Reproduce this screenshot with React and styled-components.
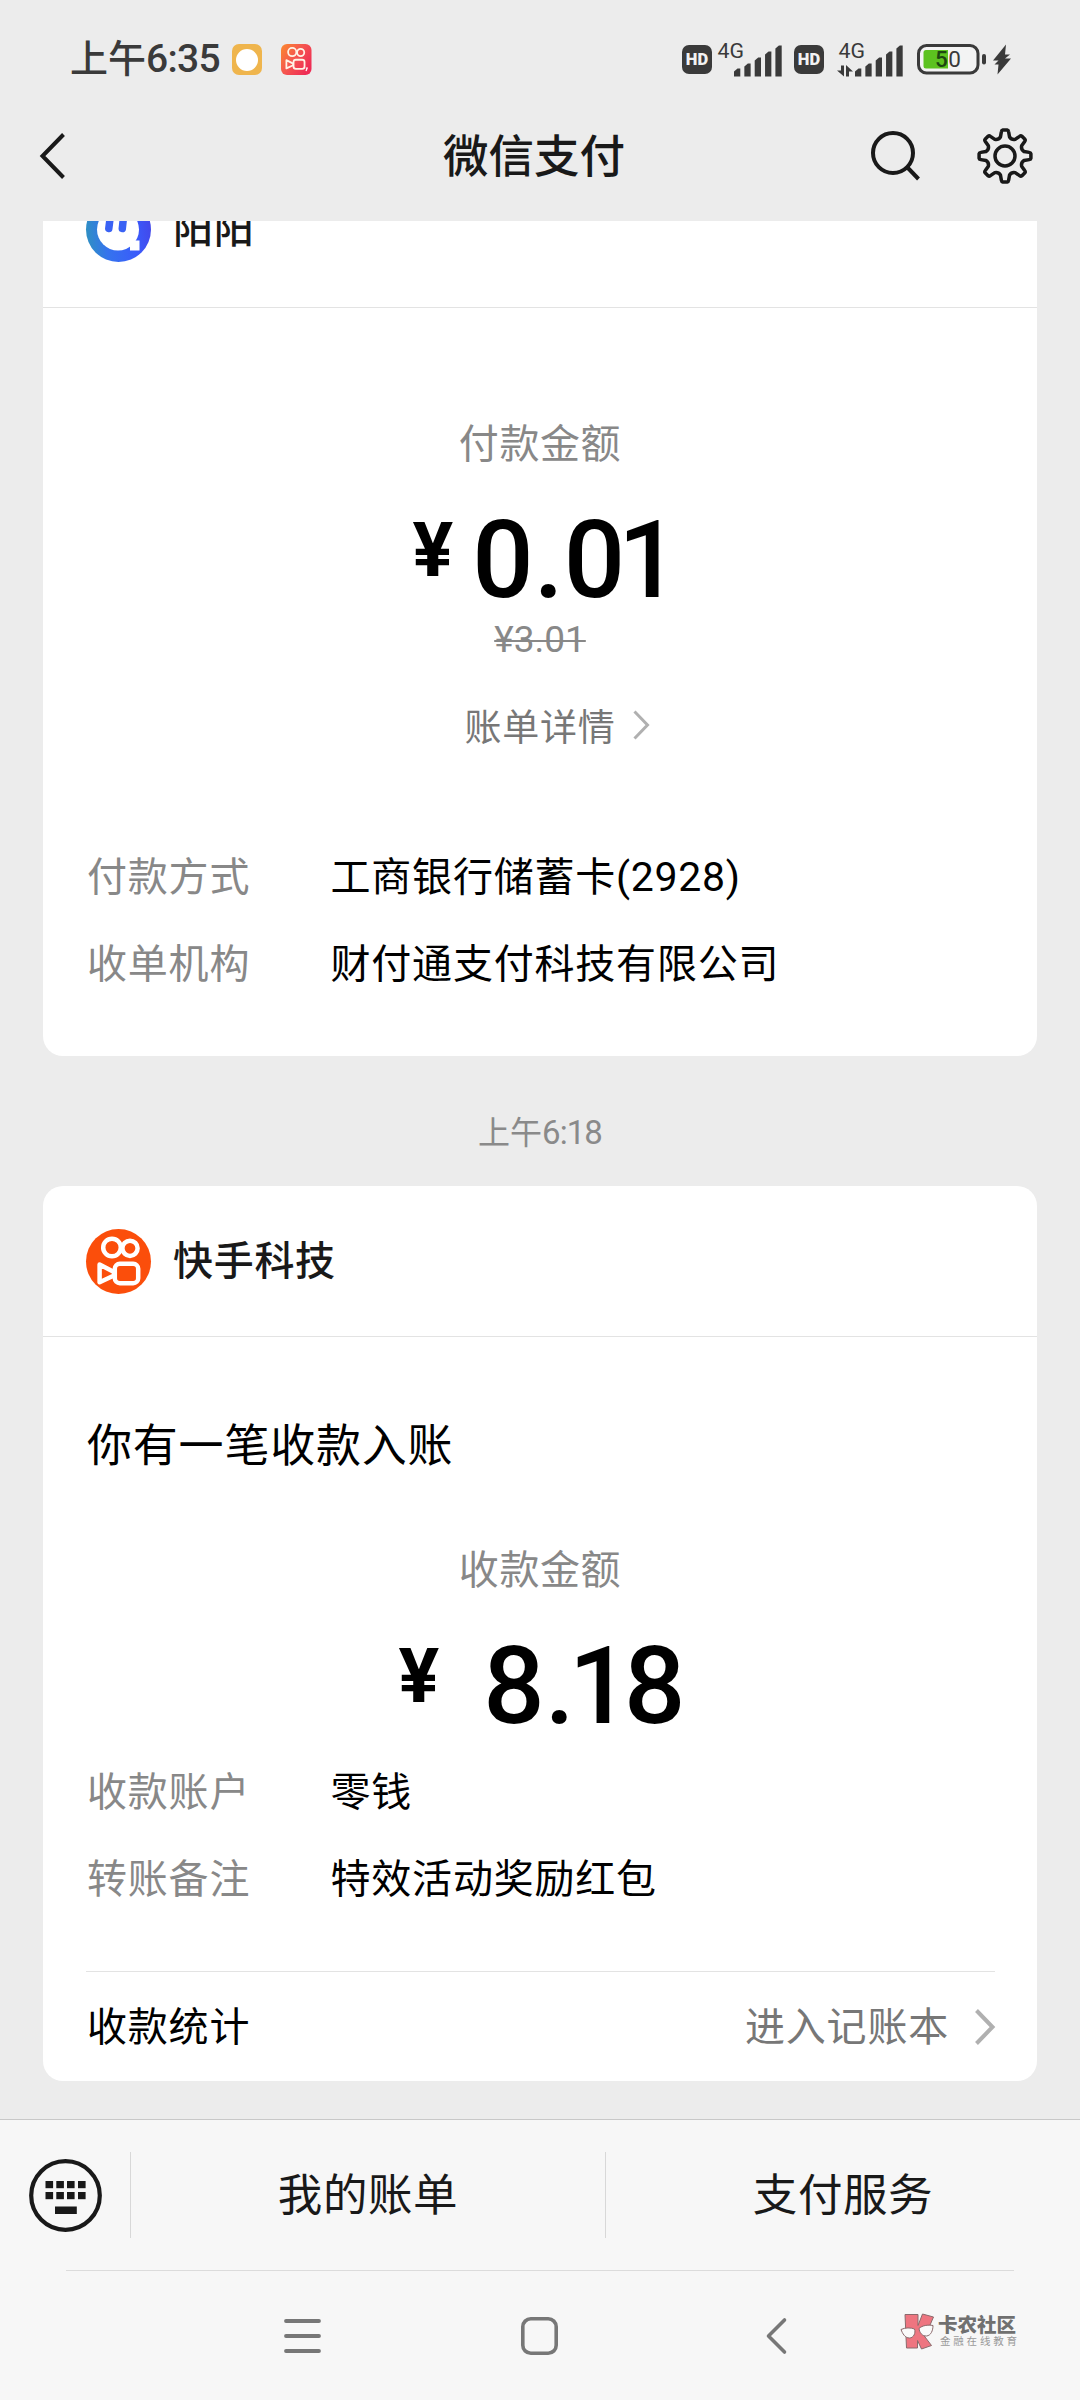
import React from "react";
import styled, { createGlobalStyle } from "styled-components";

const cjk = `"Noto Sans CJK SC", "Noto Sans", sans-serif`;
const latin = `Roboto, "Noto Sans CJK SC", sans-serif`;

const GlobalStyle = createGlobalStyle`
  * { box-sizing: border-box; }
  body { margin: 0; background: #ececec; font-family: ${cjk}; }
  svg { display: block; flex: none; overflow: visible; }
`;

const Screen = styled.div`
  width: 1080px;
  height: 2400px;
  display: flex;
  flex-direction: column;
  overflow: hidden;
  background: #ececec;
  color: #000;
`;

const StatusBar = styled.div`
  height: 119px;
  padding: 0 69px 0 70px;
  display: flex;
  align-items: center;
  justify-content: space-between;
`;

const StatusGroup = styled.div`
  display: flex;
  align-items: center;
`;

const Clock = styled.div`
  width: 162px;
  padding-bottom: 6px;
  font-size: 38px;
  line-height: 44px;
  font-weight: 500;
  color: #3a3a3a;
  white-space: nowrap;
`;

const Num = styled.span`
  font-family: ${latin};
  font-size: ${(p) => p.$size || "inherit"};
  letter-spacing: ${(p) => p.$spacing || "0"};
  line-height: 1;
`;

const RoundedApp = styled.div`
  width: 30px;
  height: 31px;
  margin-right: 19px;
  border-radius: 7px;
  background: #efb54d;
  display: flex;
  align-items: center;
  justify-content: center;
`;

const Sun = styled.div`
  width: 22px;
  height: 22px;
  border-radius: 50%;
  background: #fff;
`;

const HdBadge = styled.div`
  width: 30px;
  height: 29px;
  margin: 0 ${(p) => p.$after}px 0 ${(p) => p.$before || 0}px;
  border-radius: 7px;
  background: #3a3a3a;
  color: #f2f2f2;
  font: 900 16.5px/29px ${latin};
  text-align: center;
`;

const BatteryWrap = styled.div`
  margin-left: 14px;
`;

const TopBar = styled.div`
  height: 102px;
  padding: 0 47px 28px 38px;
  display: grid;
  grid-template-columns: 200px 1fr 200px;
  align-items: center;
`;

const Title = styled.div`
  padding: 0 3px 6px 0;
  font-size: 45.5px;
  line-height: 60px;
  font-weight: 500;
  text-align: center;
  color: #191919;
`;

const Actions = styled.div`
  display: flex;
  justify-content: flex-end;
  align-items: center;
  gap: 56px;
`;

const Feed = styled.main`
  height: 1898px;
  padding: 0 43px;
  overflow: hidden;
`;

const Card = styled.section`
  margin-top: ${(p) => p.$top || 0}px;
  background: #fff;
  border-radius: 20px;
  overflow: hidden;
`;

const CardHeader = styled.div`
  height: ${(p) => p.$height}px;
  padding: 0 44px ${(p) => p.$bottom || 0}px 43px;
  display: flex;
  align-items: center;
  gap: 22px;
  border-bottom: 1px solid #e3e3e3;
`;

const Merchant = styled.div`
  padding-bottom: 6px;
  font-size: 40px;
  line-height: 56px;
  letter-spacing: 0.7px;
  font-weight: 500;
  color: #191919;
`;

const CardBody = styled.div`
  padding: ${(p) => p.$pad};
`;

const Notice = styled.div`
  margin-bottom: 66px;
  font-size: 45px;
  line-height: 60px;
  letter-spacing: 0.8px;
`;

const AmountLabel = styled.div`
  font-size: 40px;
  line-height: 56px;
  letter-spacing: 0.6px;
  text-align: center;
  color: #888;
`;

const Amount = styled.div`
  height: 108px;
  margin-top: 37px;
  padding-left: ${(p) => p.$shift}px;
  display: flex;
  justify-content: center;
  gap: ${(p) => p.$gap}px;
  font-family: ${latin};
`;

const Yen = styled.span`
  margin-top: 6px;
  font-size: 76px;
  line-height: 76px;
  font-weight: 700;
`;

const Figure = styled.span`
  font-size: 108px;
  line-height: 108px;
  font-weight: 500;
  white-space: nowrap;
`;

const Tight = styled.span`
  letter-spacing: -${(p) => p.$by}px;
`;

const OriginalPrice = styled.div`
  margin-top: 6px;
  font: 400 37px/40px ${latin};
  text-align: center;
  color: #888;
  text-decoration: line-through;
  text-decoration-thickness: 2px;
`;

const DetailLink = styled.div`
  margin: 40px 0 96px;
  padding-left: 34px;
  display: flex;
  align-items: center;
  justify-content: center;
  gap: 17px;
  height: 50px;
  font-size: 37px;
  line-height: 50px;
  letter-spacing: 0.8px;
  color: #777;
`;

const Rows = styled.dl`
  margin: ${(p) => p.$top || 0}px 0 0;
  display: grid;
  grid-template-columns: 243.5px 1fr;
  row-gap: 31px;
  font-size: 40px;
  line-height: 56px;
  letter-spacing: 0.8px;
`;

const Term = styled.dt`
  color: #888;
`;

const Value = styled.dd`
  margin: 0;
  color: #000;
`;

const CardFooter = styled.div`
  height: 110px;
  margin: 67px 42px 0 43px;
  padding-left: 1px;
  border-top: 1px solid #e3e3e3;
  display: flex;
  align-items: center;
  justify-content: space-between;
  font-size: 40px;
  line-height: 56px;
  letter-spacing: 0.8px;
`;

const FooterText = styled.div`
  padding-bottom: 5px;
  color: ${(p) => p.$color || "#000"};
`;

const FooterLink = styled.div`
  display: flex;
  align-items: center;
  gap: 26px;
`;

const Timestamp = styled.div`
  margin: 54px 0 36px;
  font-size: 32px;
  line-height: 40px;
  text-align: center;
  color: #8a8a8a;
`;

const Bottom = styled.footer`
  height: 281px;
  background: #f7f7f7;
  border-top: 1px solid #c8c8c8;
`;

const MenuBar = styled.div`
  height: 150px;
  display: flex;
  align-items: center;
`;

const KeyboardCell = styled.div`
  width: 130px;
  padding-left: 29px;
`;

const MenuItem = styled.div`
  flex: 1;
  height: 86px;
  border-left: 1px solid #d8d8d8;
  padding-bottom: 8px;
  display: flex;
  align-items: center;
  justify-content: center;
  font-size: 44.5px;
  letter-spacing: 0.6px;
  color: #191919;
`;

const Rule = styled.div`
  height: 1px;
  margin: 0 66px;
  background: #dcdcdc;
`;

const NavBar = styled.div`
  height: 129px;
  padding: 0 63px 0 284px;
  display: flex;
  align-items: center;
`;

const NavKey = styled.div`
  margin-right: ${(p) => p.$after}px;
`;

const Watermark = styled.div`
  display: flex;
  align-items: center;
  gap: 3px;
  margin-top: -10px;
`;

const WatermarkText = styled.div`
  display: flex;
  flex-direction: column;
`;

const Brand = styled.div`
  font-size: 19.5px;
  line-height: 20px;
  font-weight: 900;
  color: #707070;
`;

const Tagline = styled.div`
  padding-left: 2px;
  font-size: 10.5px;
  line-height: 14px;
  letter-spacing: 2.8px;
  white-space: nowrap;
  color: #9a9a9a;
`;

const KwaiGlyph = ({ color, width }) => (
  <g fill="none" stroke={color} strokeWidth={width} strokeLinejoin="round">
    <circle cx="26" cy="18.5" r="8.8" />
    <circle cx="44" cy="19.3" r="7.6" />
    <rect x="28.8" y="34.8" width="23.4" height="19.4" rx="5" />
    <path d="M13.6 35.6 L28 43 V46.5 L13.6 53.2 Z" />
  </g>
);

const KwaiSmall = () => (
  <svg width="31" height="31" viewBox="0 0 31 31">
    <defs>
      <linearGradient id="kwai" x1="0" y1="0" x2="1" y2="0.7">
        <stop offset="0" stopColor="#fb8a2e" />
        <stop offset="0.5" stopColor="#f5564f" />
        <stop offset="1" stopColor="#ee2c55" />
      </linearGradient>
    </defs>
    <rect width="30.5" height="31" rx="6" fill="url(#kwai)" />
    <g transform="translate(-1 -.6) scale(.47)">
      <KwaiGlyph color="#fff3e6" width="3.8" />
    </g>
    <path d="M24.800 24h1.400l-1.200 3" stroke="#fff" strokeWidth="1.2" fill="none" />
  </svg>
);

const KwaiAvatar = () => (
  <svg width="65" height="65" viewBox="0 0 65 65">
    <circle cx="32.5" cy="32.5" r="32.5" fill="#fb4e0b" />
    <KwaiGlyph color="#fff" width="4.5" />
  </svg>
);

const GhostAvatar = () => (
  <svg width="65" height="65" viewBox="0 0 65 65">
    <defs>
      <linearGradient id="ghost" x1="0" y1="0.5" x2="1" y2="0.4">
        <stop offset="0" stopColor="#2f8fc4" />
        <stop offset="0.3" stopColor="#3573ee" />
        <stop offset="0.75" stopColor="#3a5bfb" />
        <stop offset="1" stopColor="#4348ea" />
      </linearGradient>
    </defs>
    <circle cx="32.5" cy="32.5" r="32.5" fill="url(#ghost)" />
    <circle cx="32" cy="32.5" r="21" fill="#fff" />
    <rect x="44" y="43.5" width="9.5" height="10" fill="#fff" />
    <path d="M24 22 L22.800 31.500 M37.300 22 L36.300 31.500" stroke="#3a62f4" strokeWidth="7.500" strokeLinecap="round" />
  </svg>
);

const Signal = ({ data }) => {
  const o = data ? 18 : 16;
  const w = data ? 66 : 64;
  return (
    <svg width={w} height="36" viewBox={`0 0 ${w} 36`} fill="#3a3a3a">
      <text x={data ? 1.5 : -0.5} y="15.5" fontFamily="Roboto" fontSize="21" textLength="26.5" lengthAdjust="spacingAndGlyphs">4G</text>
      {[8, 13, 19, 25, 31].map((h, i) => (
        <path key={h} d={`M${o + i * 10.35} 34.5 v${-h + 3} l3.5 -3 h2.8 v${h} z`} />
      ))}
      {data && <path d="M4 23.5h3v11L0 28.500h4z M9 34.500h3v-5h4L9 23z" />}
    </svg>
  );
};

const Battery = () => (
  <svg width="94" height="31" viewBox="0 0 94 31">
    <rect x="1.5" y="1.5" width="59.5" height="27.5" rx="8" fill="#f3f3f3" stroke="#3a3a3a" strokeWidth="3" />
    <path d="M9 6h22v18.500h-22a2.500 2.500 0 0 1-2.500-2.500v-13.500a2.500 2.500 0 0 1 2.500-2.500z" fill="#5cc21f" />
    <text x="18" y="23.200" fontFamily="Roboto" fontSize="22.500" fontWeight="500" textLength="26" fill="#1c4610">5<tspan fill="#3a3a3a" fontWeight="400">0</tspan></text>
    <rect x="65" y="10" width="4" height="10.500" rx="2" fill="#3a3a3a" />
    <path d="M89 .5L76 16.500h5.500L77.500 20.500h4L80.500 30.500L94 14.500h-6L93 10.500h-5z" fill="#3a3a3a" />
  </svg>
);

const gearPath = (() => {
  const pt = (r, deg) => {
    const a = ((deg - 90) * Math.PI) / 180;
    return `${(28 + r * Math.cos(a)).toFixed(2)} ${(28 + r * Math.sin(a)).toFixed(2)}`;
  };
  let d = "";
  for (let k = 0; k < 8; k += 1) {
    const a = k * 45;
    d += `${k ? "L" : "M"}${pt(19.5, a - 13.5)} L${pt(24.5, a - 8.5)} Q${pt(26, a - 7.5)} ${pt(26, a - 5)} L${pt(26, a + 5)} Q${pt(26, a + 7.5)} ${pt(24.5, a + 8.5)} L${pt(19.5, a + 13.5)} Q${pt(17.2, a + 22.5)} ${pt(19.5, a + 31.5)} `;
  }
  return `${d}Z`;
})();

const Chevron = ({ w, h, stroke }) => (
  <svg width={w} height={h} viewBox={`0 0 ${w} ${h}`} fill="none" stroke="#b0b0b0" strokeWidth={stroke}>
    <path d={`M1.500 1.500 L${w - 2.5} ${h / 2} L1.500 ${h - 1.5}`} />
  </svg>
);

const KeyboardIcon = () => (
  <svg width="73" height="73" viewBox="0 0 73 73" fill="#191919">
    <circle cx="36.5" cy="36.500" r="34.300" fill="none" stroke="#191919" strokeWidth="4.200" />
    {[22, 33].map((y) =>
      [16.5, 27.3, 38, 49].map((x) => <rect key={`${x}-${y}`} x={x} y={y} width="7.600" height="7.200" />)
    )}
    <rect x="26" y="47.500" width="21.800" height="7.500" />
  </svg>
);

const BrandLogo = () => (
  <svg width="35" height="36" viewBox="0 0 35 36" stroke="#8b6a6c" strokeWidth="1" strokeLinejoin="round">
    <path d="M5 1.500h13v11L22.500 1l11 3-6.500 15-3.500 3 8 10.500-10 3.500-4-8.500v7.500H6.500z" fill="#ee7580" />
    <path d="M1 16.500c4-2 10-2 13.500-.5 1.500 4-1 9-5 9-4.500 0-7-4.500-8.500-8.500z" fill="#fafafa" />
    <path d="M19 15.500c3-3 9-4 14-3 0 5-2 10-6.500 10.500-4.500.2-7-3.500-7.500-7.500z" fill="#fafafa" />
  </svg>
);

export default function App() {
  return (
    <Screen>
      <GlobalStyle />
      <StatusBar>
        <StatusGroup>
          <Clock>
            上午<Num $size="39px" $spacing="-0.7px">6:35</Num>
          </Clock>
          <RoundedApp>
            <Sun />
          </RoundedApp>
          <KwaiSmall />
        </StatusGroup>
        <StatusGroup>
          <HdBadge $after={6}>HD</HdBadge>
          <Signal />
          <HdBadge $before={12} $after={13}>HD</HdBadge>
          <Signal data />
          <BatteryWrap>
            <Battery />
          </BatteryWrap>
        </StatusGroup>
      </StatusBar>

      <TopBar>
        <svg width="28" height="46" viewBox="0 0 28 46" fill="none" stroke="#191919" strokeWidth="4">
          <path d="M25.500 1.500 L4.500 23 L25.500 44.500" />
        </svg>
        <Title>微信支付</Title>
        <Actions>
          <svg width="50" height="50" viewBox="0 0 50 50" fill="none" stroke="#191919" strokeWidth="4">
            <circle cx="22" cy="22" r="20" />
            <path d="M36 36 L47.500 48" />
          </svg>
          <svg width="56" height="56" viewBox="0 0 56 56" fill="none" stroke="#191919" strokeWidth="3.500" strokeLinejoin="round">
            <path d={gearPath} />
            <circle cx="28" cy="28" r="10" />
          </svg>
        </Actions>
      </TopBar>

      <Feed>
        <Card $top={-67}>
          <CardHeader $height={154} $bottom={3}>
            <GhostAvatar />
            <Merchant>阳阳</Merchant>
          </CardHeader>
          <CardBody $pad="105px 44px 67px">
            <AmountLabel>付款金额</AmountLabel>
            <Amount $shift={12} $gap={19}>
              <Yen>¥</Yen>
              <Figure>
                0.<Tight $by={7}>0</Tight>1
              </Figure>
            </Amount>
            <OriginalPrice>¥3.01</OriginalPrice>
            <DetailLink>
              账单详情
              <Chevron w={17} h={30} stroke={3} />
            </DetailLink>
            <Rows>
              <Term>付款方式</Term>
              <Value>
                工商银行储蓄卡<Num $size="41px" $spacing="0.7px">(2928)</Num>
              </Value>
              <Term>收单机构</Term>
              <Value>财付通支付科技有限公司</Value>
            </Rows>
          </CardBody>
        </Card>

        <Timestamp>
          上午<Num $size="33px" $spacing="-0.9px">6:18</Num>
        </Timestamp>

        <Card>
          <CardHeader $height={151}>
            <KwaiAvatar />
            <Merchant>快手科技</Merchant>
          </CardHeader>
          <CardBody $pad="76px 44px 0">
            <Notice>你有一笔收款入账</Notice>
            <AmountLabel>收款金额</AmountLabel>
            <Amount $shift={4} $gap={44}>
              <Yen>¥</Yen>
              <Figure>
                8<Tight $by={6}>.1</Tight>8
              </Figure>
            </Amount>
            <Rows $top={21}>
              <Term>收款账户</Term>
              <Value>零钱</Value>
              <Term>转账备注</Term>
              <Value>特效活动奖励红包</Value>
            </Rows>
          </CardBody>
          <CardFooter>
            <FooterText>收款统计</FooterText>
            <FooterLink>
              <FooterText $color="#777">进入记账本</FooterText>
              <Chevron w={20} h={36} stroke={4} />
            </FooterLink>
          </CardFooter>
        </Card>
      </Feed>

      <Bottom>
        <MenuBar>
          <KeyboardCell>
            <KeyboardIcon />
          </KeyboardCell>
          <MenuItem>我的账单</MenuItem>
          <MenuItem>支付服务</MenuItem>
        </MenuBar>
        <Rule />
        <NavBar>
          <NavKey $after={200}>
            <svg width="37" height="34" viewBox="0 0 37 34" stroke="#777" strokeWidth="3.800" strokeLinecap="round">
              <path d="M2 2h33M2 17h33M2 32h33" />
            </svg>
          </NavKey>
          <NavKey $after={208}>
            <svg width="37" height="38" viewBox="0 0 37 38" fill="none" stroke="#777" strokeWidth="3.600">
              <rect x="1.800" y="1.800" width="33.400" height="34.400" rx="8" />
            </svg>
          </NavKey>
          <NavKey $after={113}>
            <svg width="21" height="36" viewBox="0 0 21 36" fill="none" stroke="#777" strokeWidth="3.600" strokeLinecap="round" strokeLinejoin="round">
              <path d="M18.500 2 L2.500 18 L18.500 34" />
            </svg>
          </NavKey>
          <Watermark>
            <BrandLogo />
            <WatermarkText>
              <Brand>卡农社区</Brand>
              <Tagline>金融在线教育</Tagline>
            </WatermarkText>
          </Watermark>
        </NavBar>
      </Bottom>
    </Screen>
  );
}
